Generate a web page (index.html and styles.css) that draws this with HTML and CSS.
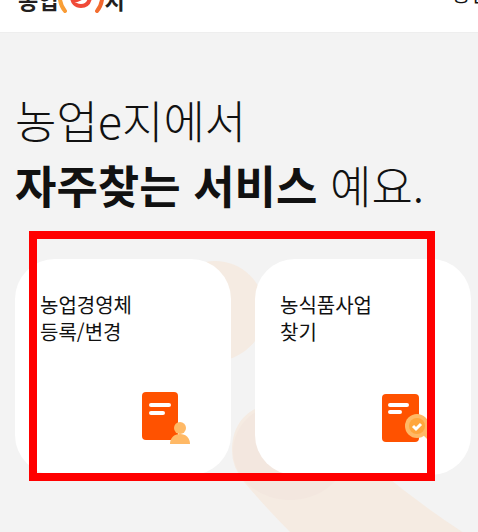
FILE: index.html
```html
<!DOCTYPE html>
<html lang="ko">
<head>
<meta charset="utf-8">
<meta name="viewport" content="width=device-width, initial-scale=1">
<title>농업e지</title>
<link rel="stylesheet" href="styles.css">
</head>
<body>
<header class="header">
  <a class="logo" href="#">
    <span>농업</span>
    <svg class="logo-mark" viewBox="0 0 46 40" aria-hidden="true">
      <defs>
        <linearGradient id="mark" x1="0" x2="1"><stop offset="0" stop-color="#f9a236"/><stop offset="1" stop-color="#f2662f"/></linearGradient>
      </defs>
      <path d="M9 2C-1 12 0 30 7 38M37 2c10 10 9 28 2 36" fill="none" stroke="url(#mark)" stroke-width="4" stroke-linecap="round"/>
      <path d="M16 28C22 26 30 23 29 17 28 12 14 14 14 23 14 30 18 33 23 33 28 33 31 30 32 25" fill="none" stroke="#f04a38" stroke-width="4"/>
    </svg>
    <span>지</span>
  </a>
  <a class="menu" href="#">농업</a>
</header>
<main class="main">
  <svg class="backdrop" viewBox="0 0 478 500" aria-hidden="true">
    <circle class="tint" cx="215" cy="278" r="50"/>
    <path class="tint" d="M232 418C232 388 250 369 290 369C325 369 340 404 374 433Q419 471 464 500H291Q268 477 244 449Q232 434 232 418Z"/>
    <ellipse class="shade" cx="290" cy="418" rx="57" ry="49"/>
  </svg>
  <h1 class="title">농업e지에서<br><strong>자주찾는 서비스</strong> 예요.</h1>
  <nav class="services">
    <a class="card" href="#">
      <span>농업경영체<br>등록/변경</span>
      <svg class="icon" viewBox="0 0 64 64" aria-hidden="true">
        <rect x="7" y="6" width="36" height="48" rx="4" fill="#ff5200"/>
        <path d="M16 19h18M16 27h12" stroke="#fff" stroke-width="4" stroke-linecap="round"/>
        <circle cx="45" cy="42" r="6" fill="#ffb966"/>
        <path d="M35 58c0-6 4-10 10-10s10 4 10 10z" fill="#ffb966"/>
      </svg>
    </a>
    <a class="card" href="#">
      <span>농식품사업<br>찾기</span>
      <svg class="icon" viewBox="0 0 64 64" aria-hidden="true">
        <rect x="7" y="8" width="37" height="48" rx="4" fill="#ff5200"/>
        <path d="M15 19h17M15 26h10" stroke="#fff" stroke-width="4" stroke-linecap="round"/>
        <path d="M50 48l6 6" stroke="#ffb966" stroke-width="4"/>
        <circle cx="42" cy="40" r="12" fill="#ffb966"/>
        <circle cx="42" cy="40" r="8" fill="#ffa63d"/>
        <path d="M38 40l3 3 5-5" fill="none" stroke="#fff" stroke-width="3"/>
      </svg>
    </a>
    <div class="highlight"></div>
  </nav>
</main>
</body>
</html>
```
FILE: styles.css
```css
* { box-sizing: border-box; }
body {
  margin: 0;
  background: #f3f3f3;
  color: #111;
  font-family: "Noto Sans CJK KR", sans-serif;
  overflow: hidden;
}
a { color: inherit; text-decoration: none; }
.header {
  display: flex;
  justify-content: space-between;
  align-items: flex-end;
  height: 33px;
  padding-left: 18px;
  background: #fff;
  border-bottom: 1px solid #eee;
  overflow: hidden;
}
.logo {
  display: flex;
  align-items: flex-end;
  padding-bottom: 19px;
  color: #231f20;
  font-size: 22px;
  font-weight: 700;
  line-height: 28px;
}
.logo-mark { width: 46px; height: 40px; }
.menu {
  width: 26px;
  padding-bottom: 24px;
  font-size: 20px;
  line-height: 28px;
  white-space: nowrap;
}
.main {
  position: relative;
  min-height: calc(100vh - 33px);
  padding: 54px 0 56px 15px;
}
.backdrop {
  position: absolute;
  top: 0;
  left: 0;
  width: 478px;
  height: 500px;
}
.tint { fill: #f5ebe2; }
.shade { fill: #f3e7df; }
.title {
  position: relative;
  margin: 0 0 42px;
  font-size: 45px;
  font-weight: 300;
  line-height: 65px;
}
.title strong { font-weight: 700; }
.services {
  position: relative;
  display: flex;
  gap: 24px;
}
.card {
  display: flex;
  flex: 0 0 216px;
  flex-direction: column;
  justify-content: space-between;
  height: 216px;
  padding: 32px 32px 25px 25px;
  border-radius: 40px;
  background: #fff;
  font-size: 20px;
  line-height: 27px;
}
.icon {
  align-self: flex-end;
  width: 64px;
  height: 64px;
}
.highlight {
  position: absolute;
  top: -28px;
  left: 14px;
  width: 406px;
  height: 250px;
  border: 8px solid #f00;
}
```
